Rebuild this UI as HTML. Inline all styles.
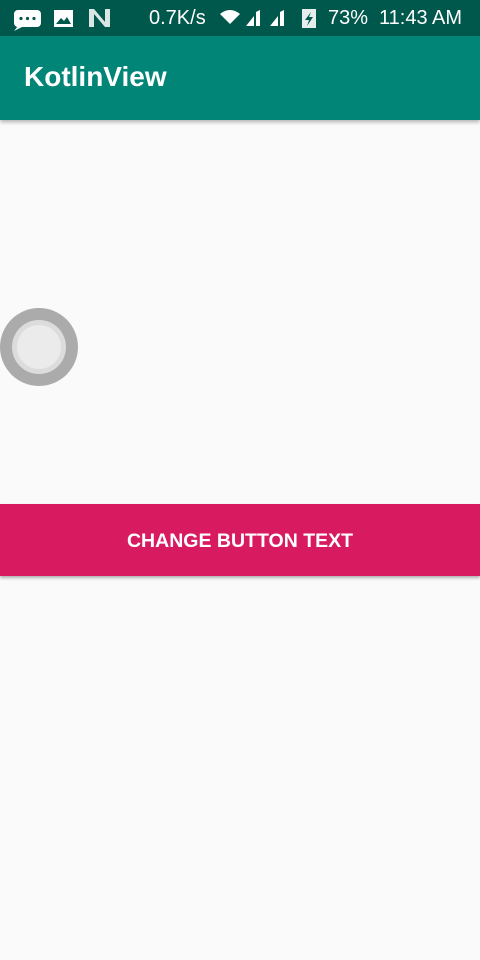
<!DOCTYPE html>
<html><head><style>
body{margin:0;width:480px;height:960px;background:#fafafa;font-family:"Liberation Sans",sans-serif;position:relative;overflow:hidden}
.sb{position:absolute;top:0;left:0;width:480px;height:36px;background:#00574b;color:#fff;font-size:20px}
.ab{position:absolute;top:36px;left:0;width:480px;height:84px;background:#008577;box-shadow:0 2px 4px rgba(0,0,0,.3)}
.ab span{position:absolute;left:24px;top:25px;color:#fff;font-size:28px;font-weight:bold}
.c1{position:absolute;left:0;top:308px;width:78px;height:78px;border-radius:50%;background:#ababab}
.c2{position:absolute;left:12px;top:320px;width:54px;height:54px;border-radius:50%;background:#dcdcdc}
.c3{position:absolute;left:17px;top:325px;width:44px;height:44px;border-radius:50%;background:#ebebeb}
.btn{position:absolute;left:0;top:504px;width:480px;height:72px;background:#d81b60;box-shadow:0 2px 3px rgba(0,0,0,.3);color:#fff;font-size:19.5px;font-weight:bold;text-align:center;line-height:74px}
</style></head><body>
<div class="sb">
<svg width="480" height="36" style="position:absolute;left:0;top:0">
<rect x="14" y="10" width="27" height="17" rx="4" fill="#fff"/><path d="M18 26 L14 31 L24 26Z" fill="#fff"/>
<circle cx="21" cy="18.5" r="1.6" fill="#00574b"/><circle cx="27.5" cy="18.5" r="1.6" fill="#00574b"/><circle cx="34" cy="18.5" r="1.6" fill="#00574b"/>
<rect x="54" y="10" width="19" height="17" fill="#fff"/><path d="M56 24 L61 18 L64 21 L67 17 L71 24Z" fill="#00574b"/>
<path d="M89 9 H94 L105 22 V9 H110 V27 H105 L94 14 V27 H89Z" fill="#fff" opacity=".85"/>
<path d="M220 14 Q230 6 240 14 L230 24Z" fill="#fff"/>
<path d="M246 26 L254 26 L254 16Z M256 26 V12 L260 10 V26Z" fill="#fff"/>
<path d="M270 26 L278 26 L278 16Z M280 26 V12 L284 10 V26Z" fill="#fff"/>
<rect x="302" y="9" width="14" height="19" fill="#fff" opacity=".9"/><path d="M311 12 L305 20 H309 L307 26 L313 17 H309Z" fill="#00574b"/>
</svg>
<span style="position:absolute;left:149px;top:7px">0.7K/s</span>
<span style="position:absolute;left:328px;top:7px">73%</span>
<span style="position:absolute;left:379px;top:7px">11:43 AM</span>
</div>
<div class="ab"><span>KotlinView</span></div>
<div class="c1"></div><div class="c2"></div><div class="c3"></div>
<div class="btn">CHANGE BUTTON TEXT</div>
</body></html>
